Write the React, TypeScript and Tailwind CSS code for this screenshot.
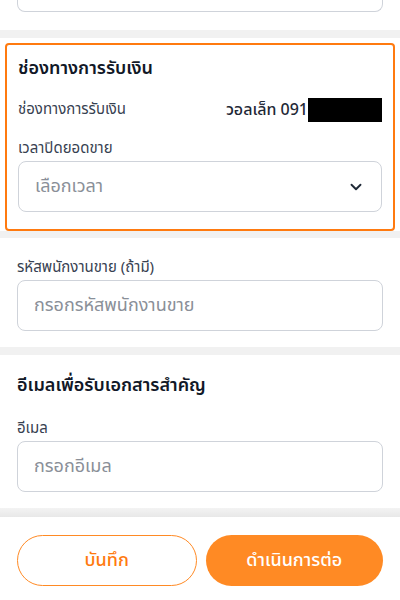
import { ChevronDown } from 'lucide-react';

const Label = ({ children }: { children: React.ReactNode }) => (
  <p className="text-[15px] leading-5 text-[#374151]">{children}</p>
);

const Field = ({ placeholder, select }: { placeholder: string; select?: boolean }) => (
  <div className="flex h-[51px] items-center justify-between rounded-lg border border-[#cfd3da] px-4">
    <span className="text-[18px] text-[#8a8f98]">{placeholder}</span>
    {select && <ChevronDown size={18} strokeWidth={2.5} className="text-[#1f2937]" />}
  </div>
);

export default function App() {
  return (
    <div
      className="flex h-[600px] w-[400px] flex-col overflow-hidden bg-white"
      style={{ fontFamily: '"Noto Sans Thai", "Noto Sans", "Liberation Sans", sans-serif' }}
    >
      {/* tail of previous section */}
      <div className="px-[17px] pb-[18px]">
        <div className="h-[12px] rounded-b-lg border-x border-b border-[#cfd3da]" />
      </div>
      <div className="h-[8px] bg-[#f1f1f1]" />

      {/* highlighted payment channel */}
      <div className="bg-white px-[5px] pt-[5px]">
        <div className="rounded-[4px] border-2 border-[#ff7a0f] px-[11px] pb-[17px] pt-[12px]">
          <h2 className="text-[18px] font-semibold leading-6 text-[#111827]">ช่องทางการรับเงิน</h2>
          <div className="mt-[17px] flex items-center justify-between">
            <Label>ช่องทางการรับเงิน</Label>
            <div className="flex items-center">
              <span className="text-[16px] font-medium text-[#1f2937]">วอลเล็ท 091</span>
              <span className="h-[24px] w-[74px] bg-black" />
            </div>
          </div>
          <div className="mt-[17px]">
            <Label>เวลาปิดยอดขาย</Label>
          </div>
          <div className="mt-[2px]">
            <Field placeholder="เลือกเวลา" select />
          </div>
        </div>
      </div>
      <div className="h-[7px] bg-[#f1f1f1]" />

      {/* sales staff code */}
      <div className="px-[17px] pb-[16px] pt-[20px]">
        <Label>รหัสพนักงานขาย (ถ้ามี)</Label>
        <div className="mt-[2px]">
          <Field placeholder="กรอกรหัสพนักงานขาย" />
        </div>
      </div>
      <div className="h-[8px] bg-[#f1f1f1]" />

      {/* email */}
      <div className="px-[17px] pb-[16px] pt-[19px]">
        <h2 className="text-[18px] font-semibold leading-6 text-[#111827]">อีเมลเพื่อรับเอกสารสำคัญ</h2>
        <div className="mt-[21px]">
          <Label>อีเมล</Label>
        </div>
        <div className="mt-[2px]">
          <Field placeholder="กรอกอีเมล" />
        </div>
      </div>
      <div className="h-[9px] bg-gradient-to-b from-[#f3f3f3] to-[#e8e8e8]" />

      {/* bottom actions */}
      <div className="flex gap-[9px] px-[17px] pt-[18px]">
        <button className="h-[51px] flex-1 rounded-full border border-[#ff8a24] bg-white text-[18px] font-medium text-[#ff7a0f]">
          บันทึก
        </button>
        <button className="h-[51px] flex-1 rounded-full bg-[#ff8a24] text-[18px] font-medium text-white">
          ดำเนินการต่อ
        </button>
      </div>
    </div>
  );
}
